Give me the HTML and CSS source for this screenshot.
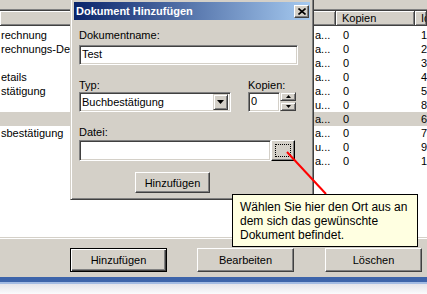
FILE: index.html
```html
<!DOCTYPE html>
<html>
<head>
    <meta charset="utf-8">
    <title>Dokument Hinzufügen</title>
    <link rel="stylesheet" href="styles.css">
</head>
<body>
    <div class="window">
        <div class="topstrip"></div>
        <div class="listview">
            <div class="lv-inner">
                <div class="lv-head">
                    <div class="hcell"></div>
                    <div class="hcell">Kopien</div>
                    <div class="hcell">Id</div>
                </div>
                <div class="lv-body">
                    <div class="row"><span>rechnung</span><span>a...</span><span>0</span><span>1</span></div>
                    <div class="row"><span>rechnungs-Details</span><span>a...</span><span>0</span><span>2</span></div>
                    <div class="row"><span></span><span>a...</span><span>0</span><span>3</span></div>
                    <div class="row"><span>etails</span><span>a...</span><span>0</span><span>4</span></div>
                    <div class="row"><span>stätigung</span><span>a...</span><span>0</span><span>5</span></div>
                    <div class="row"><span></span><span>u...</span><span>0</span><span>8</span></div>
                    <div class="row selected"><span></span><span>a...</span><span>0</span><span>6</span></div>
                    <div class="row"><span>sbestätigung</span><span>a...</span><span>0</span><span>7</span></div>
                    <div class="row"><span></span><span>u...</span><span>0</span><span>9</span></div>
                    <div class="row"><span></span><span>a...</span><span>0</span><span>10</span></div>
                </div>
            </div>
        </div>
        <div class="actions">
            <button class="btn default">Hinzufügen</button>
            <button class="btn">Bearbeiten</button>
            <button class="btn">Löschen</button>
        </div>
        <div class="taskbar"></div>
    </div>

    <!-- modal dialog over the list -->
    <div class="dialog">
        <div class="titlebar">
            <span class="title">Dokument Hinzufügen</span>
            <span class="close">
                <svg width="8" height="7" viewBox="0 0 8 7"><path d="M0.5 0.5 L7.5 6.5 M7.5 0.5 L0.5 6.5" stroke="#000" stroke-width="1.6"/></svg>
            </span>
        </div>
        <div class="dlg-body">
            <div class="lbl">Dokumentname:</div>
            <div class="field name">Test</div>

            <div class="typrow">
                <div class="col-typ">
                    <div class="lbl">Typ:</div>
                    <div class="field combo">
                        <span>Buchbestätigung</span>
                        <span class="combo-btn">
                            <svg width="7" height="4" viewBox="0 0 7 4"><path d="M0 0 H7 L3.5 4 Z" fill="#000"/></svg>
                        </span>
                    </div>
                </div>
                <div class="col-kop">
                    <div class="lbl">Kopien:</div>
                    <div class="spin">
                        <div class="field num">0</div>
                        <div class="spin-btns">
                            <span class="sbtn"><svg width="5" height="3" viewBox="0 0 5 3"><path d="M2.5 0 L5 3 H0 Z" fill="#000"/></svg></span>
                            <span class="sbtn"><svg width="5" height="3" viewBox="0 0 5 3"><path d="M0 0 H5 L2.5 3 Z" fill="#000"/></svg></span>
                        </div>
                    </div>
                </div>
            </div>

            <div class="lbl datei">Datei:</div>
            <div class="filerow">
                <div class="field file"></div>
                <span class="browse"><span class="focus"></span></span>
            </div>

            <button class="btn small">Hinzufügen</button>
        </div>
    </div>

    <svg class="pointer" width="427" height="294" viewBox="0 0 427 294">
        <line x1="287" y1="152" x2="326" y2="194" stroke="#f00" stroke-width="2"/>
    </svg>

    <div class="tip">Wählen Sie hier den Ort aus an<br>dem sich das gewünschte<br>Dokument befindet.</div>
</body>
</html>
```

FILE: styles.css
```css
body { margin: 0; width: 427px; height: 294px; overflow: hidden; background: #d4d0c8; font: 11px "Liberation Sans", Arial, sans-serif; color: #000; position: relative; }

.window { display: flex; flex-direction: column; height: 294px; }
.topstrip { height: 9px; }

/* list view */
.listview { height: 230px; box-sizing: border-box; border-top: 1px solid #808080; border-bottom: 1px solid #fff; }
.lv-inner { height: 100%; box-sizing: border-box; border-top: 1px solid #404040; border-bottom: 1px solid #d4d0c8; background: #fff; }
.lv-head { display: grid; grid-template-columns: 336px 79px 1fr; height: 15px; background: #d4d0c8; }
.hcell { box-sizing: border-box; padding-left: 6px; line-height: 14px; white-space: nowrap; overflow: hidden;
         box-shadow: inset 1px 1px #fff, inset -1px -1px #808080; border-right: 1px solid #404040; border-bottom: 1px solid #404040; }
.lv-body { padding-top: 2px; }
.row { display: grid; grid-template-columns: 314px 22px 79px 1fr; height: 14px; line-height: 14px; }
.row span { white-space: nowrap; overflow: hidden; }
.row span:nth-child(1) { padding-left: 1px; }
.row span:nth-child(2) { padding-left: 1px; }
.row span:nth-child(3) { padding-left: 7px; }
.row span:nth-child(4) { padding-left: 6px; }
.row.selected { background: #d4d0c8; }

/* buttons */
.btn { box-sizing: border-box; background: #d4d0c8; font: 11px "Liberation Sans", Arial, sans-serif; color: #000; padding: 0;
       border: 1px solid; border-color: #fff #404040 #404040 #fff; box-shadow: inset -1px -1px #808080, inset 1px 1px #d4d0c8; }
.btn.default { border: 1px solid #000; box-shadow: inset 1px 1px #fff, inset -1px -1px #404040, inset -2px -2px #808080; }

.actions { height: 38px; box-sizing: border-box; padding: 9px 0 0 70px; display: flex; gap: 30px; }
.actions .btn { width: 97px; height: 24px; }
.actions .btn:last-child { margin-left: 1px; }

.taskbar { flex: 1; background: linear-gradient(to bottom, #3d64aa 0, #3d64aa 5px, #a3bbe3 5px, #a3bbe3 7px, #e4e4ea 7px, #fbfbfc 100%); }

/* dialog */
.dialog { position: absolute; left: 70px; top: -2px; width: 244px; height: 202px; box-sizing: border-box; padding: 3px; background: #d4d0c8;
          border: 1px solid; border-color: #d4d0c8 #404040 #404040 #d4d0c8; box-shadow: inset 1px 1px #fff, inset -1px -1px #808080; }
.titlebar { height: 18px; display: flex; justify-content: space-between; align-items: center; padding: 0 1px 0 2px;
            background: linear-gradient(to right, #0a246a, #a6caf0); }
.title { color: #fff; font-weight: bold; font-size: 11px; line-height: 18px; }
.close { width: 15px; height: 13px; box-sizing: border-box; display: flex; align-items: center; justify-content: center; background: #d4d0c8;
         border: 1px solid; border-color: #fff #404040 #404040 #fff; box-shadow: inset -1px -1px #808080; }

.dlg-body { padding: 9px 12px 0 5px; }
.lbl { line-height: 13px; height: 13px; white-space: nowrap; }

.field { box-sizing: border-box; height: 20px; background: #fff; padding-left: 2px; line-height: 16px; white-space: nowrap;
         border: 1px solid; border-color: #808080 #fff #fff #808080; box-shadow: inset 1px 1px #404040, inset -1px -1px #d4d0c8; }
.field.name { margin-top: 3px; }

.typrow { display: flex; gap: 17px; margin-top: 14px; }
.col-typ { width: 152px; }
.field.combo { display: flex; justify-content: space-between; align-items: center; padding: 0 2px 0 2px; }
.combo-btn { width: 15px; height: 16px; box-sizing: border-box; display: flex; align-items: center; justify-content: center; background: #d4d0c8;
             border: 1px solid; border-color: #d4d0c8 #404040 #404040 #d4d0c8; box-shadow: inset 1px 1px #fff, inset -1px -1px #808080; }

.spin { display: flex; }
.field.num { width: 32px; }
.spin-btns { display: flex; flex-direction: column; gap: 1px; }
.sbtn { width: 16px; height: 9px; box-sizing: border-box; display: flex; align-items: center; justify-content: center; background: #d4d0c8;
        border: 1px solid; border-color: #d4d0c8 #404040 #404040 #d4d0c8; box-shadow: inset 1px 1px #fff, inset -1px -1px #808080; }

.lbl.datei { margin-top: 14px; }
.filerow { display: flex; margin-top: 1px; }
.field.file { width: 192px; height: 21px; }
.browse { width: 24px; height: 21px; box-sizing: border-box; padding: 3px; background: #d4d0c8;
          border: 1px solid; border-color: #fff #000 #000 #fff; box-shadow: inset -1px -1px #808080, inset 1px 1px #d4d0c8; }
.focus { display: block; height: 100%; box-sizing: border-box; border: 1px dotted #000; }

.btn.small { display: block; width: 75px; height: 21px; margin: 11px 0 0 56px; }

/* callout */
.pointer { position: absolute; left: 0; top: 0; pointer-events: none; }
.tip { position: absolute; left: 232px; top: 194px; width: 186px; height: 53px; box-sizing: border-box; padding: 5px 0 0 7px;
       background: #ffffe1; border: 1px solid #000; font-size: 12px; line-height: 14px; white-space: nowrap; }
```
